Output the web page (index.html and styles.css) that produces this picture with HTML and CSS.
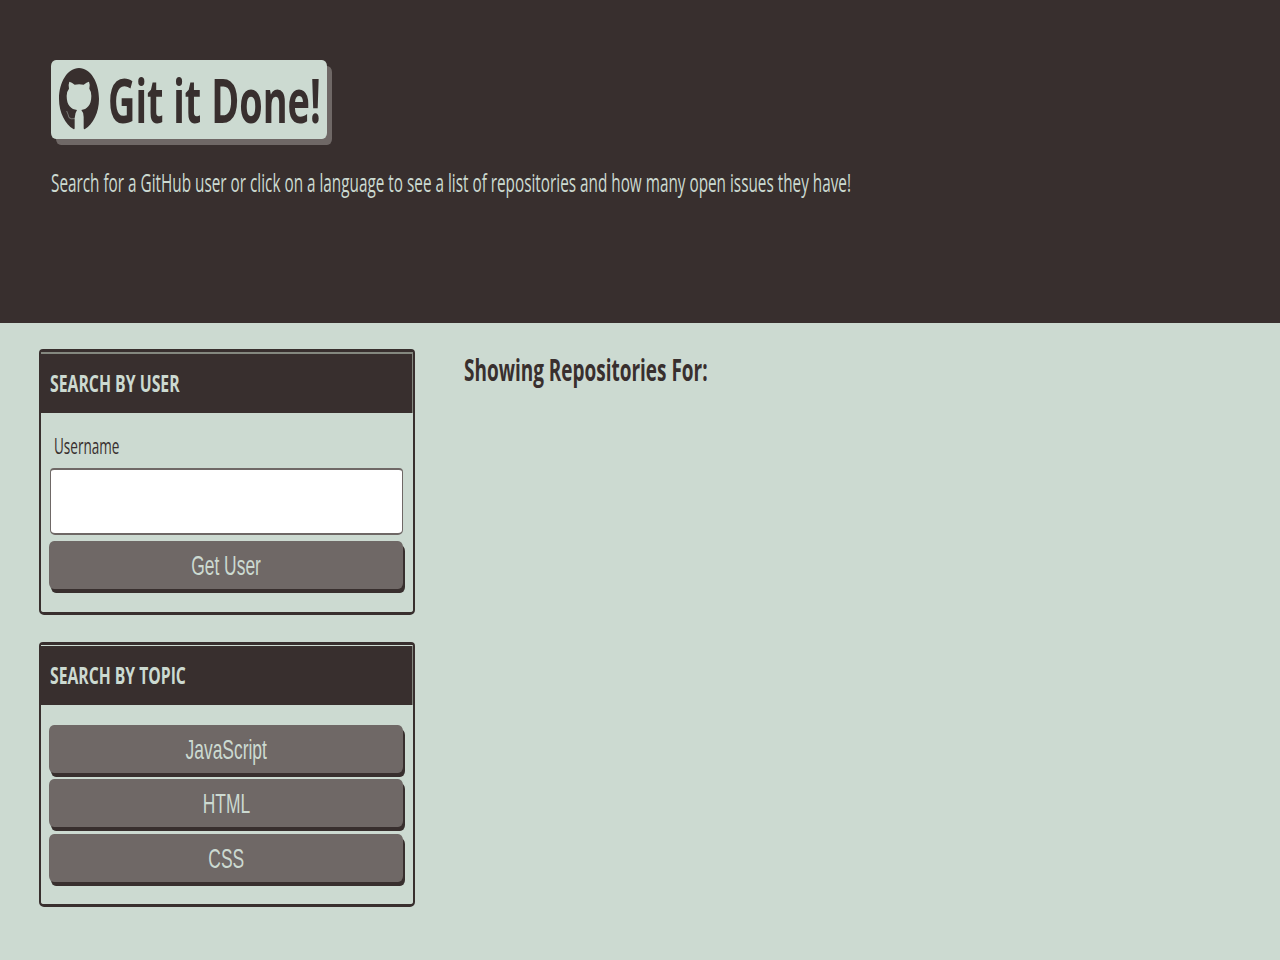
FILE: index.html
```html
<!DOCTYPE html>
<html lang="en">
<head>
<meta charset="utf-8">
<title>Git it Done</title>
<link rel="stylesheet" href="styles.css">
</head>
<body>
<header class="hero">
  <h1 class="brand">
    <svg class="mark" viewBox="0 0 120 186" preserveAspectRatio="none" aria-hidden="true">
      <path fill="currentColor" d="M60 0C26 0 0 42 0 93C0 134 19 169 43 183Q47 185 47 179V154V150Q48 134 54 126C37 124 23 113 23 84Q23 70 30 62Q27 51 31 41Q38 42 47 50Q60 47 74 50Q83 42 90 41Q94 51 91 62Q97 70 97 84C97 113 83 124 67 126Q74 133 74 147V179Q74 185 78 183C102 169 120 134 120 93C120 42 94 0 60 0Z"/>
      <path class="tail" d="M23 129L27 139L30 149Q36 154 48 152"/>
    </svg>
    <span class="fit brand-text">Git it Done!</span>
  </h1>
  <p class="intro"><span class="fit intro-text">Search for a GitHub user or click on a language to see a list of repositories and how many open issues they have!</span></p>
</header>
<main class="content">
  <aside class="sidebar">
    <section class="card">
      <h2 class="card-title"><span class="fit user-title">SEARCH BY USER</span></h2>
      <form class="card-body user-form">
        <label class="label" for="username"><span class="fit label-text">Username</span></label>
        <input class="input" id="username" type="text">
        <button class="btn" type="button"><span class="fit">Get User</span></button>
      </form>
    </section>
    <section class="card topic-card">
      <h2 class="card-title"><span class="fit topic-title">SEARCH BY TOPIC</span></h2>
      <div class="card-body topics">
        <button class="btn" type="button"><span class="fit">JavaScript</span></button>
        <button class="btn" type="button"><span class="fit">HTML</span></button>
        <button class="btn" type="button"><span class="fit">CSS</span></button>
      </div>
    </section>
  </aside>
  <section class="results">
    <h2 class="subtitle"><span class="fit subtitle-text">Showing Repositories For:</span></h2>
  </section>
</main>
</body>
</html>
```
FILE: styles.css
```css
:root {
  --dark: #382f2e;
  --light: #ccdad1;
  --mid: #6f6866;
}
* { box-sizing: border-box; }
body {
  margin: 0;
  height: 960px;
  overflow: hidden;
  background: var(--light);
  color: var(--dark);
  font-family: "Open Sans", sans-serif;
}
h1, h2, p { margin: 0; }
.fit {
  display: inline-block;
  white-space: nowrap;
}
.hero {
  height: 323px;
  padding: 60px 51px 0;
  background: var(--dark);
  color: var(--light);
}
.brand {
  display: flex;
  width: 276px;
  height: 79px;
  padding: 8px 8px 0;
  gap: 9px;
  border-radius: 5px / 6px;
  background: var(--light);
  color: var(--dark);
  box-shadow: 5px 6px 0 var(--mid);
  font-size: 61.5px;
  line-height: 62px;
}
.mark { flex: none; width: 40px; height: 62px; }
.tail { fill: none; stroke: var(--light); stroke-width: 2; opacity: .65; }
.brand-text, .intro-text, .user-title, .topic-title, .label-text, .subtitle-text { transform-origin: left center; }
.brand-text { transform: scaleX(.616); }
.intro { margin-top: 26px; font-size: 16px; line-height: 36px; }
.intro-text { transform: scale(.957, 1.56); }
.content { display: flex; gap: 49px; padding: 26px 39px 0; }
.sidebar { display: flex; flex: none; flex-direction: column; gap: 27px; width: 376px; }
.card {
  height: 266px;
  border: solid var(--dark);
  border-width: 3px 2px;
  border-radius: 4px 4px 5px 5px;
}
.card-title {
  height: 61px;
  padding: 0 9px;
  border-top: 2px solid #84887f;
  border-right: 1px solid #84887f;
  background: var(--dark);
  color: var(--light);
  font-size: 22.5px;
  line-height: 60px;
}
.topic-card { height: 265px; }
.topic-card .card-title { height: 60px; border-top: 1px solid var(--light); }
.user-title { transform: scaleX(.702); }
.topic-title { transform: scaleX(.698); }
.card-body { display: flex; flex-direction: column; }
.user-form { padding: 18px 10px 0 9px; }
.label { height: 37px; padding-left: 4px; font-size: 21.5px; font-weight: 400; line-height: 30px; }
.label-text { transform: scaleX(.63); }
.input {
  width: 353px;
  height: 67px;
  border: solid var(--mid);
  border-width: 2px 1px;
  border-radius: 4px 4px 5px 5px;
  background: #fff;
}
.btn {
  flex: none;
  width: 354px;
  height: 48px;
  margin-left: -1px;
  padding: 0;
  border: 0;
  border-radius: 5px / 6px;
  background: var(--mid);
  color: var(--light);
  box-shadow: 2px 4px 0 var(--dark);
  font: 27.5px/49px "Liberation Sans", sans-serif;
}
.btn .fit { transform: scaleX(.634); }
.user-form .btn { margin-top: 6px; }
.topics { gap: 6.4px; padding: 20px 9px 0; }
.subtitle { width: 400px; font-size: 29.5px; line-height: 42px; }
.subtitle-text { transform: scaleX(.643); }
```
